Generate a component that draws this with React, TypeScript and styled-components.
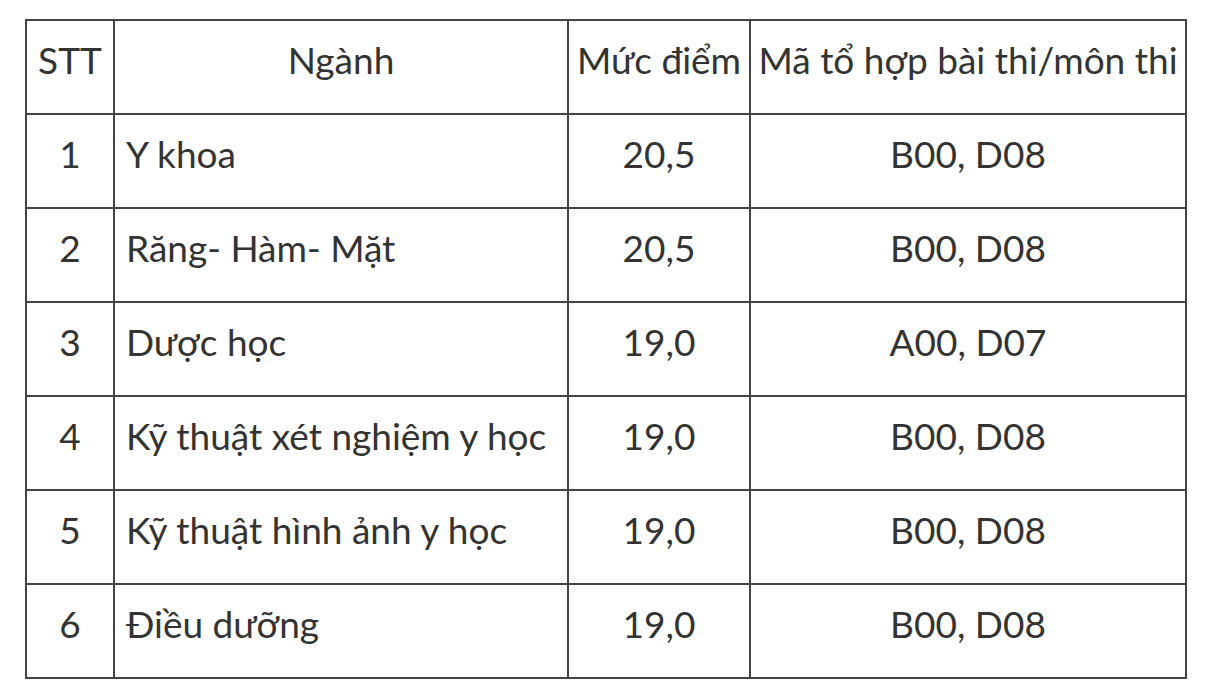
import React from "react";
import styled, { createGlobalStyle } from "styled-components";

const GlobalStyle = createGlobalStyle`
  html, body {
    margin: 0;
    padding: 0;
    background: #ffffff;
  }
  body {
    font-family: Lato, "Noto Sans", sans-serif;
    color: #333333;
  }
`;

const Page = styled.div`
  width: 1206px;
  height: 698px;
  padding: 19px 0 0 25px;
  box-sizing: border-box;
`;

const Table = styled.table`
  width: 1160px;
  border-collapse: collapse;
  table-layout: fixed;
  font-size: 37px;
  color: #333333;
`;

const Cell = styled.td<{ $align?: "left" | "center" }>`
  height: 94px;
  box-sizing: border-box;
  border: 2px solid #444444;
  padding: 0 11px 16px;
  text-align: ${(p) => p.$align ?? "center"};
  vertical-align: middle;
  white-space: nowrap;
  line-height: 1;
`;

const HeadCell = styled(Cell).attrs({ as: "th" })`
  font-weight: 400;
  padding-left: 0;
  padding-right: 0;
`;

type Row = {
  stt: number;
  name: string;
  score: string;
  code: string;
};

const rows: Row[] = [
  { stt: 1, name: "Y khoa", score: "20,5", code: "B00, D08" },
  { stt: 2, name: "Răng- Hàm- Mặt", score: "20,5", code: "B00, D08" },
  { stt: 3, name: "Dược học", score: "19,0", code: "A00, D07" },
  { stt: 4, name: "Kỹ thuật xét nghiệm y học", score: "19,0", code: "B00, D08" },
  { stt: 5, name: "Kỹ thuật hình ảnh y học", score: "19,0", code: "B00, D08" },
  { stt: 6, name: "Điều dưỡng", score: "19,0", code: "B00, D08" },
];

export default function App() {
  return (
    <>
      <GlobalStyle />
      <Page>
        <Table>
          <colgroup>
            <col style={{ width: 88 }} />
            <col style={{ width: 454 }} />
            <col style={{ width: 182 }} />
            <col style={{ width: 436 }} />
          </colgroup>
          <thead>
            <tr>
              <HeadCell>STT</HeadCell>
              <HeadCell>Ngành</HeadCell>
              <HeadCell>Mức điểm</HeadCell>
              <HeadCell>Mã tổ hợp bài thi/môn thi</HeadCell>
            </tr>
          </thead>
          <tbody>
            {rows.map((r) => (
              <tr key={r.stt}>
                <Cell>{r.stt}</Cell>
                <Cell $align="left">{r.name}</Cell>
                <Cell>{r.score}</Cell>
                <Cell>{r.code}</Cell>
              </tr>
            ))}
          </tbody>
        </Table>
      </Page>
    </>
  );
}
